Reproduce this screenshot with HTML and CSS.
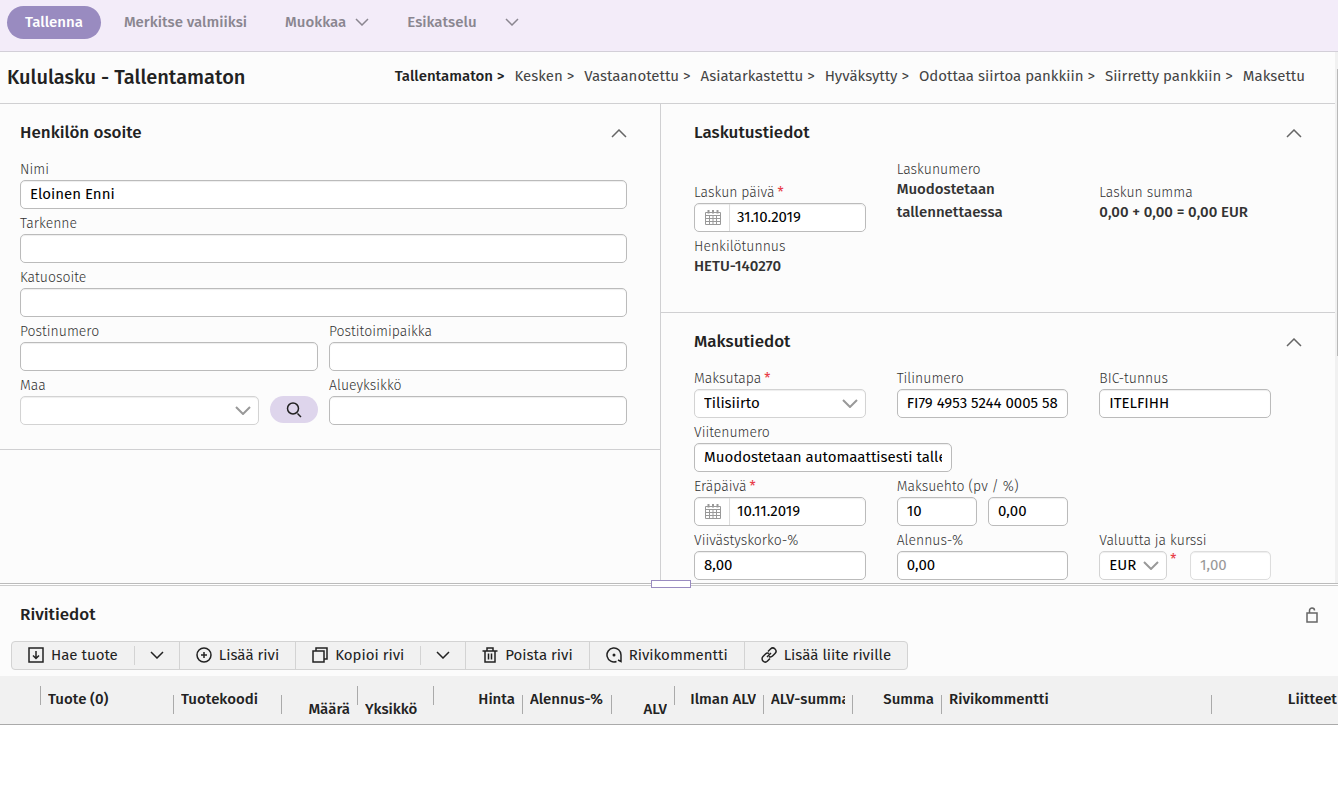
FILE: index.html
```
<!DOCTYPE html>
<html lang="fi">

<head>
  <meta charset="UTF-8">
  <meta name="viewport" content="width=device-width, initial-scale=1.0">
  <title>Kululasku - Tallentamaton</title>
  <link rel="stylesheet" href="styles.css">
</head>

<body>
  <!-- top actions -->
  <header class="topbar">
    <button class="btn-save" type="button">Tallenna</button>
    <button class="btn-top" type="button" disabled>Merkitse valmiiksi</button>
    <button class="btn-top" type="button" disabled>Muokkaa
      <svg class="chevron" viewBox="0 0 14 8"><path d="M1 1l6 6 6-6"/></svg>
    </button>
    <button class="btn-top" type="button" disabled>Esikatselu</button>
    <button class="btn-top btn-arrow" type="button" aria-label="Esikatselun valinnat" disabled>
      <svg class="chevron" viewBox="0 0 14 8"><path d="M1 1l6 6 6-6"/></svg>
    </button>
  </header>

  <main class="pane">
    <div class="title-row">
      <h1>Kululasku - Tallentamaton</h1>
      <ol class="steps">
        <li class="current">Tallentamaton &gt;</li>
        <li>Kesken &gt;</li>
        <li>Vastaanotettu &gt;</li>
        <li>Asiatarkastettu &gt;</li>
        <li>Hyväksytty &gt;</li>
        <li>Odottaa siirtoa pankkiin &gt;</li>
        <li>Siirretty pankkiin &gt;</li>
        <li>Maksettu</li>
      </ol>
    </div>

    <div class="columns">
      <div class="col-left">
        <section class="panel panel-address">
          <div class="panel-head">
            <h2>Henkilön osoite</h2>
            <button class="btn-fold" type="button" aria-label="Sulje">
              <svg viewBox="0 0 16 9"><path d="M1 8l7-7 7 7"/></svg>
            </button>
          </div>
          <div class="grid-address">
            <div class="field wide">
              <label for="nimi">Nimi</label>
              <input id="nimi" type="text" value="Eloinen Enni">
            </div>
            <div class="field wide">
              <label for="tarkenne">Tarkenne</label>
              <input id="tarkenne" type="text">
            </div>
            <div class="field wide">
              <label for="katuosoite">Katuosoite</label>
              <input id="katuosoite" type="text">
            </div>
            <div class="field">
              <label for="postinumero">Postinumero</label>
              <input id="postinumero" type="text">
            </div>
            <div class="field">
              <label for="postitoimipaikka">Postitoimipaikka</label>
              <input id="postitoimipaikka" type="text">
            </div>
            <div class="field">
              <label for="maa">Maa</label>
              <div class="inline">
                <div class="select">
                  <select id="maa"><option></option></select>
                  <svg viewBox="0 0 16 9"><path d="M1 1l7 7 7-7"/></svg>
                </div>
                <button class="btn-search" type="button" aria-label="Hae maa">
                  <svg viewBox="0 0 16 16"><circle cx="7" cy="6.500" r="5.500"/><path d="M11.500 11.500l3.500 3.500"/></svg>
                </button>
              </div>
            </div>
            <div class="field">
              <label for="alueyksikko">Alueyksikkö</label>
              <input id="alueyksikko" type="text">
            </div>
          </div>
        </section>
      </div>

      <div class="col-right">
        <section class="panel panel-billing">
          <div class="panel-head">
            <h2>Laskutustiedot</h2>
            <button class="btn-fold" type="button" aria-label="Sulje">
              <svg viewBox="0 0 16 9"><path d="M1 8l7-7 7 7"/></svg>
            </button>
          </div>
          <div class="grid-three">
            <div class="field">
              <label for="paiva">Laskun päivä<span class="req">*</span></label>
              <div class="date">
                <svg viewBox="0 0 16 16"><path d="M.5 3.500h15v12H.5zM.5 6.500h15M.5 9.500h15M.5 12.500h15M4.500 6v9.500M8 6v9.500M11.500 6v9.500"/><path class="rings" d="M3.500 1v3.500M8 1v3.500M12.500 1v3.500"/></svg>
                <input id="paiva" type="text" value="31.10.2019">
              </div>
            </div>
            <div class="field static">
              <span class="label">Laskunumero</span>
              <strong>Muodostetaan tallennettaessa</strong>
            </div>
            <div class="field static">
              <span class="label">Laskun summa</span>
              <strong>0,00 + 0,00 = 0,00 EUR</strong>
            </div>
            <div class="field static">
              <span class="label">Henkilötunnus</span>
              <strong>HETU-140270</strong>
            </div>
          </div>
        </section>

        <section class="panel panel-payment">
          <div class="panel-head">
            <h2>Maksutiedot</h2>
            <button class="btn-fold" type="button" aria-label="Sulje">
              <svg viewBox="0 0 16 9"><path d="M1 8l7-7 7 7"/></svg>
            </button>
          </div>
          <div class="grid-three">
            <div class="field">
              <label for="maksutapa">Maksutapa<span class="req">*</span></label>
              <div class="select">
                <select id="maksutapa"><option>Tilisiirto</option></select>
                <svg viewBox="0 0 16 9"><path d="M1 1l7 7 7-7"/></svg>
              </div>
            </div>
            <div class="field">
              <label for="tilinumero">Tilinumero</label>
              <input id="tilinumero" type="text" value="FI79 4953 5244 0005 58">
            </div>
            <div class="field">
              <label for="bic">BIC-tunnus</label>
              <input id="bic" type="text" value="ITELFIHH">
            </div>
            <div class="field reference">
              <label for="viite">Viitenumero</label>
              <input id="viite" type="text" value="Muodostetaan automaattisesti tallennettaessa">
            </div>
            <div class="field">
              <label for="erapaiva">Eräpäivä<span class="req">*</span></label>
              <div class="date">
                <svg viewBox="0 0 16 16"><path d="M.5 3.500h15v12H.5zM.5 6.500h15M.5 9.500h15M.5 12.500h15M4.500 6v9.500M8 6v9.500M11.500 6v9.500"/><path class="rings" d="M3.500 1v3.500M8 1v3.500M12.500 1v3.500"/></svg>
                <input id="erapaiva" type="text" value="10.11.2019">
              </div>
            </div>
            <div class="field">
              <label for="maksuehto">Maksuehto (pv / %)</label>
              <div class="inline">
                <input id="maksuehto" type="text" value="10">
                <input type="text" aria-label="Maksuehto %" value="0,00">
              </div>
            </div>
            <div class="field new-row">
              <label for="korko">Viivästyskorko-%</label>
              <input id="korko" type="text" value="8,00">
            </div>
            <div class="field">
              <label for="alennus">Alennus-%</label>
              <input id="alennus" type="text" value="0,00">
            </div>
            <div class="field">
              <label for="valuutta">Valuutta ja kurssi</label>
              <div class="currency">
                <div class="select">
                  <select id="valuutta"><option>EUR</option></select>
                  <svg viewBox="0 0 16 9"><path d="M1 1l7 7 7-7"/></svg>
                </div>
                <span class="req">*</span>
                <input type="text" aria-label="Kurssi" value="1,00" disabled>
              </div>
            </div>
          </div>
        </section>
      </div>
    </div>
    <div class="scrollbar"></div>
  </main>

  <div class="splitter"><div class="handle"></div></div>

  <section class="rows">
    <div class="rows-head">
      <h2>Rivitiedot</h2>
      <svg class="lock" viewBox="0 0 12 16"><path d="M1 6h10v9H1zM3.500 6V3.500a2.500 2.500 0 0 1 5 0"/></svg>
    </div>

    <div class="toolbar">
      <button type="button">
        <svg viewBox="0 0 16 16"><path d="M1 1h14v14H1z"/><path d="M8 4v7M5 8.500l3 3 3-3"/></svg>
        Hae tuote
      </button>
      <button class="drop" type="button" aria-label="Tuotevalinnat">
        <svg class="chevron" viewBox="0 0 14 8"><path d="M1 1l6 6 6-6"/></svg>
      </button>
      <button type="button">
        <svg viewBox="0 0 16 16"><circle cx="8" cy="8" r="7"/><path d="M8 5v6M5 8h6"/></svg>
        Lisää rivi
      </button>
      <button type="button">
        <svg viewBox="0 0 16 16"><path d="M1 4h11v11H1zM4 4V1h11v11h-3"/></svg>
        Kopioi rivi
      </button>
      <button class="drop" type="button" aria-label="Kopiointivalinnat">
        <svg class="chevron" viewBox="0 0 14 8"><path d="M1 1l6 6 6-6"/></svg>
      </button>
      <button type="button">
        <svg viewBox="0 0 16 16"><path d="M.5 4h15M5 4V1h6v3M3 4v11h10V4M6.500 6.500v6M9.500 6.500v6"/></svg>
        Poista rivi
      </button>
      <button type="button">
        <svg viewBox="0 0 16 16"><path d="M10.500 14.500A7 7 0 1 1 15 8v6.500l-3-1.500"/><circle class="dot" cx="8" cy="8" r="1.500"/></svg>
        Rivikommentti
      </button>
      <button type="button">
        <svg viewBox="0 0 16 16"><path d="M6 10l4-4M7 4.500l2.500-2.500a3 3 0 0 1 4.500 4.500L11.500 9a3 3 0 0 1-3.500.5M9 11.500L6.500 14A3 3 0 0 1 2 9.500L4.500 7A3 3 0 0 1 8 6.500"/></svg>
        Lisää liite riville
      </button>
    </div>

    <table>
      <colgroup>
        <col class="w-sel"><col class="w-product"><col class="w-code"><col class="w-unit"><col class="w-unit">
        <col class="w-sum"><col class="w-sum"><col class="w-vat"><col class="w-sum"><col class="w-sum"><col class="w-sum">
        <col class="w-comment"><col>
      </colgroup>
      <thead>
        <tr>
          <th class="low"><div><span></span></div></th>
          <th><div><span>Tuote (0)</span></div></th>
          <th><div><span>Tuotekoodi</span></div></th>
          <th class="low num"><div><span>Määrä</span></div></th>
          <th class="low"><div><span>Yksikkö</span></div></th>
          <th class="num"><div><span>Hinta</span></div></th>
          <th><div><span>Alennus-%</span></div></th>
          <th class="low num"><div><span>ALV</span></div></th>
          <th class="num"><div><span>Ilman ALV</span></div></th>
          <th><div><span>ALV-summa</span></div></th>
          <th class="num"><div><span>Summa</span></div></th>
          <th><div><span>Rivikommentti</span></div></th>
          <th class="num last"><div><span>Liitteet</span></div></th>
        </tr>
      </thead>
    </table>
  </section>
</body>

</html>
```
FILE: styles.css
```
/* reset */
* {
  box-sizing: border-box;
}

body,
h1,
h2,
ol {
  margin: 0;
  padding: 0;
}

body {
  min-height: 100vh;
  background-color: #fff;
  color: #222;
  font-family: "Fira Sans", "Noto Sans", sans-serif;
  font-size: 15px;
  overflow-x: hidden;
}

button,
input,
select {
  font: inherit;
  color: inherit;
}

button {
  border: 0;
  padding: 0;
  background: none;
}

svg {
  display: block;
  flex: none;
  fill: none;
  stroke: currentColor;
}

h1 {
  font-size: 20px;
  font-weight: 500;
}

h2 {
  font-size: 17px;
  font-weight: 500;
  line-height: 28px;
}

/* top actions */
.topbar {
  display: flex;
  align-items: center;
  height: 52px;
  padding: 0 7px 7px;
  background-color: #f3ecf9;
  border-bottom: 1px solid #d3cfd8;
}

.btn-save {
  height: 33px;
  margin-right: 23px;
  padding: 0 18px;
  border-radius: 17px;
  background-color: #998bc0;
  color: #fff;
  font-weight: 500;
}

.btn-top {
  display: flex;
  align-items: center;
  gap: 9px;
  margin-right: 38px;
  color: #8a8690;
  font-weight: 500;
}

.btn-arrow {
  margin-left: -10px;
}

.chevron {
  width: 14px;
  height: 8px;
  stroke-width: 1.5;
}

/* upper pane */
.pane {
  position: relative;
  padding-right: 3px;
  background-color: #fcfcfc;
}

.title-row {
  display: flex;
  align-items: center;
  justify-content: space-between;
  height: 52px;
  padding: 0 30px 2px 7px;
  border-bottom: 1px solid #d0d0d2;
}

.steps {
  display: flex;
  gap: 10px;
  padding-bottom: 2px;
  list-style: none;
  color: #444;
  white-space: nowrap;
}

.steps .current {
  color: #222;
  font-weight: 500;
}

.columns {
  display: grid;
  grid-template-columns: 661fr 674fr;
}

.col-left {
  border-right: 1px solid #d0d0d2;
}

.panel {
  padding: 15px 33px 0;
}

.panel-address {
  padding-left: 20px;
  padding-bottom: 24px;
  border-bottom: 1px solid #d0d0d2;
}

.panel-billing {
  padding-bottom: 26px;
  border-bottom: 1px solid #d0d0d2;
}

.panel-payment {
  padding-bottom: 3px;
}

.panel-head {
  display: flex;
  align-items: center;
  justify-content: space-between;
  margin-bottom: 14px;
}

.btn-fold svg {
  width: 16px;
  height: 9px;
  color: #666;
  stroke-width: 1.5;
}

.grid-address {
  display: grid;
  grid-template-columns: 1fr 1fr;
  gap: 6px 11px;
}

.wide {
  grid-column: span 2;
}

.grid-three {
  display: grid;
  grid-template-columns: repeat(3, 1fr);
  row-gap: 6px;
  align-items: end;
}

.grid-three .field {
  padding-right: 31px;
}

.grid-three .reference {
  grid-column: span 3;
}

.reference input {
  max-width: 258px;
}

.new-row {
  grid-column: 1;
}

/* fields */
.field label,
.field .label {
  display: block;
  margin-bottom: 1px;
  color: #333;
  font-size: 14px;
  font-weight: 300;
  line-height: 18px;
  white-space: nowrap;
}

.grid-three .static {
  padding-right: 60px;
  padding-bottom: 8px;
}

.grid-three .static .label {
  margin-bottom: -1px;
}

.static strong {
  display: block;
  font-weight: 500;
  line-height: 23px;
  color: #333;
}

.grid-three .static:nth-child(3) {
  padding-right: 0;
}

.req {
  color: #e8404a;
  font-size: 14px;
  font-weight: 400;
}

label .req {
  margin-left: 3px;
}

input,
.date,
select {
  display: block;
  width: 100%;
  height: 29px;
  border: 1px solid #bbb;
  border-radius: 5px;
  background-color: #fff;
  box-shadow: inset 0 1px 1px #eee;
  color: #000;
}

input {
  padding: 0 9px 1px;
}

input:disabled {
  border-color: #ddd;
  color: #999;
}

.select {
  position: relative;
  flex: 1;
}

select {
  appearance: none;
  padding: 0 9px 1px;
  border-color: #d3d3d3;
}

.select svg {
  position: absolute;
  top: 10px;
  right: 8px;
  width: 16px;
  height: 9px;
  color: #999;
  stroke-width: 2;
  pointer-events: none;
}

.date {
  display: flex;
  align-items: center;
}

.date svg {
  width: 16px;
  height: 16px;
  margin: 0 8px 2px 10px;
  color: #999;
}

.date .rings {
  stroke-width: 2;
}

.date input {
  height: 27px;
  min-width: 0;
  padding: 0 7px 1px;
  border: 0;
  border-left: 1px solid #ddd;
  border-radius: 0 5px 5px 0;
}

.inline,
.currency {
  display: flex;
  gap: 11px;
}

.inline input {
  min-width: 0;
}

.btn-search {
  display: flex;
  align-items: center;
  justify-content: center;
  width: 48px;
  height: 27px;
  border-radius: 14px;
  background-color: #ded5ec;
}

.btn-search svg {
  width: 16px;
  height: 16px;
  stroke-width: 1.5;
}

.currency {
  gap: 3px;
}

.currency .select {
  flex: 0 0 68px;
}

.currency input {
  width: 81px;
  margin-left: auto;
}

/* scroll track on the right edge of the pane */
.scrollbar {
  position: absolute;
  top: 0;
  right: 0;
  bottom: 0;
  width: 3px;
  background-color: #f1f1f1;
}

.scrollbar::after {
  content: "";
  display: block;
  width: 1px;
  height: 54%;
  margin: 17px 0 0 2px;
  background-color: #b8b8b8;
}

/* splitter */
.splitter {
  position: relative;
  height: 3px;
  border-top: 1px solid #bbb;
  border-bottom: 1px solid #ccc;
}

.handle {
  position: absolute;
  top: -4px;
  left: 50%;
  width: 40px;
  height: 8px;
  margin-left: -18px;
  border: 1px solid #998bc0;
  background-color: #fff;
}

/* rows */
.rows {
  background-color: #fcfcfc;
}

.rows-head {
  display: flex;
  align-items: center;
  justify-content: space-between;
  padding: 15px 20px 12px;
}

.lock {
  width: 12px;
  height: 16px;
  color: #666;
  stroke-width: 1.5;
}

.toolbar {
  display: flex;
  width: max-content;
  height: 29px;
  margin: 0 0 6px 11px;
  border: 1px solid #d3d3d3;
  border-radius: 4px;
  background-color: #f1f1f1;
}

.toolbar button {
  display: flex;
  align-items: center;
  gap: 7px;
  padding: 0 16px 1px;
  border-left: 1px solid #d3d3d3;
}

.toolbar button:first-child {
  border-left: 0;
}

.toolbar svg {
  width: 16px;
  height: 16px;
  stroke-width: 1.5;
}

.toolbar .drop {
  height: 19px;
  align-self: center;
  padding: 0 15px 2px;
}

.toolbar .drop svg {
  width: 14px;
  height: 8px;
}

.toolbar .dot {
  fill: currentColor;
  stroke: none;
}

table {
  width: 100%;
  table-layout: fixed;
  border-collapse: collapse;
  background-color: #f1f1f1;
}

.w-sel { width: 41px; }
.w-product { width: 133px; }
.w-code { width: 108px; }
.w-unit { width: 76px; }
.w-sum { width: 89px; }
.w-vat { width: 63px; }
.w-comment { width: 270px; }

th {
  padding: 0;
  border-bottom: 1px solid #aaa;
  font-weight: 500;
  text-align: left;
}

th div {
  display: flex;
  height: 48px;
  padding-left: 7px;
}

th span {
  flex: 1;
  margin: 13px 7px 0 0;
  line-height: 20px;
  overflow: hidden;
  white-space: nowrap;
}

/* short divider after each heading */
th div::after {
  content: "";
  width: 1px;
  height: 19px;
  margin-top: 19px;
  background-color: #aaa;
}

.low span {
  margin-top: 23px;
}

.low div::after {
  margin-top: 10px;
}

.num {
  text-align: right;
}

.last span {
  margin-right: 1px;
}

.last div::after {
  display: none;
}
```
